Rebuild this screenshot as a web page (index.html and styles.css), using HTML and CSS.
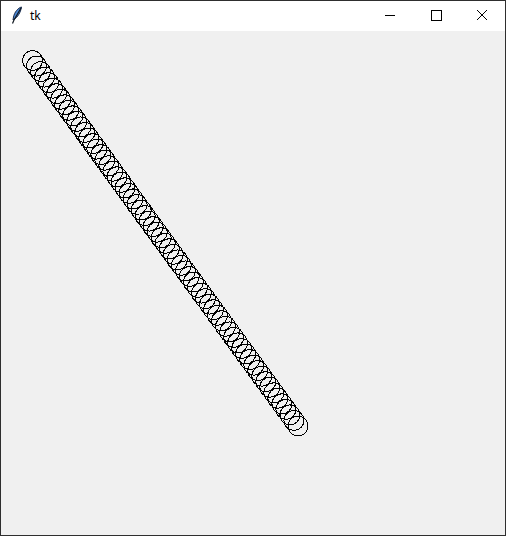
FILE: index.html
```html
<!DOCTYPE html>
<html>
<head>
<meta charset="utf-8">
<link rel="stylesheet" href="styles.css">
</head>
<body>
<div class="window">
  <div class="titlebar">
    <div class="title">
      <svg class="feather" width="12" height="18" viewBox="0 0 12 18">
        <path d="M10.5 1 C7 2 3.5 6 2.5 11 L2 14 L3.5 13 C6.5 11 9.5 7 10.5 1 Z" fill="#4a86d4" stroke="#1a2a48" stroke-width="1"/>
        <path d="M10 2 L3 14 L1.5 17.5" fill="none" stroke="#101820" stroke-width="1.2"/>
      </svg>
      <span class="label">tk</span>
    </div>
    <div class="controls">
      <div class="btn">
        <svg width="12" height="12" viewBox="0 0 12 12"><path d="M1 6.5 H11" stroke="#000" stroke-width="1"/></svg>
      </div>
      <div class="btn">
        <svg width="12" height="12" viewBox="0 0 12 12"><rect x="1.5" y="1.5" width="10" height="10" fill="none" stroke="#000" stroke-width="1"/></svg>
      </div>
      <div class="btn">
        <svg width="12" height="12" viewBox="0 0 12 12"><path d="M1 1 L11 11 M11 1 L1 11" stroke="#000" stroke-width="1"/></svg>
      </div>
    </div>
  </div>
  <div class="canvas">
    <svg id="trail" class="trail" width="504" height="504" viewBox="0 0 504 504"></svg>
  </div>
</div>
<script src="script.js"></script>
</body>
</html>
```
FILE: styles.css
```css
html, body {
  margin: 0;
  padding: 0;
  background: #f0f0f0;
}
.window {
  width: 504px;
  height: 534px;
  border: 1px solid #2e2e2e;
  display: flex;
  flex-direction: column;
  background: #f0f0f0;
}
.titlebar {
  height: 30px;
  background: #ffffff;
  display: flex;
  justify-content: space-between;
  align-items: stretch;
}
.title {
  display: flex;
  align-items: center;
  padding-left: 10px;
  gap: 7px;
}
.feather {
  display: block;
  margin-top: -2px;
}
.label {
  font-family: "Noto Sans", "DejaVu Sans", sans-serif;
  font-size: 12px;
  color: #000;
  margin-top: -1px;
}
.controls {
  display: flex;
}
.btn {
  width: 46px;
  display: flex;
  align-items: center;
  justify-content: center;
}
.btn svg {
  display: block;
  margin-top: -2px;
}
.canvas {
  flex: 1;
  background: #f0f0f0;
}
.trail {
  display: block;
}
```
FILE: script.js
```js
(function () {
  var svg = document.getElementById('trail');
  var ns = 'http://www.w3.org/2000/svg';
  var n = 67;
  var x0 = 31.5, y0 = 29.5, x1 = 297, y1 = 395;
  for (var i = 0; i < n; i++) {
    var t = i / (n - 1);
    var c = document.createElementNS(ns, 'circle');
    c.setAttribute('cx', (x0 + (x1 - x0) * t).toFixed(2));
    c.setAttribute('cy', (y0 + (y1 - y0) * t).toFixed(2));
    c.setAttribute('r', '10');
    c.setAttribute('fill', 'none');
    c.setAttribute('stroke', '#000');
    c.setAttribute('stroke-width', '1');
    c.setAttribute('shape-rendering', 'crispEdges');
    svg.appendChild(c);
  }
})();
```
